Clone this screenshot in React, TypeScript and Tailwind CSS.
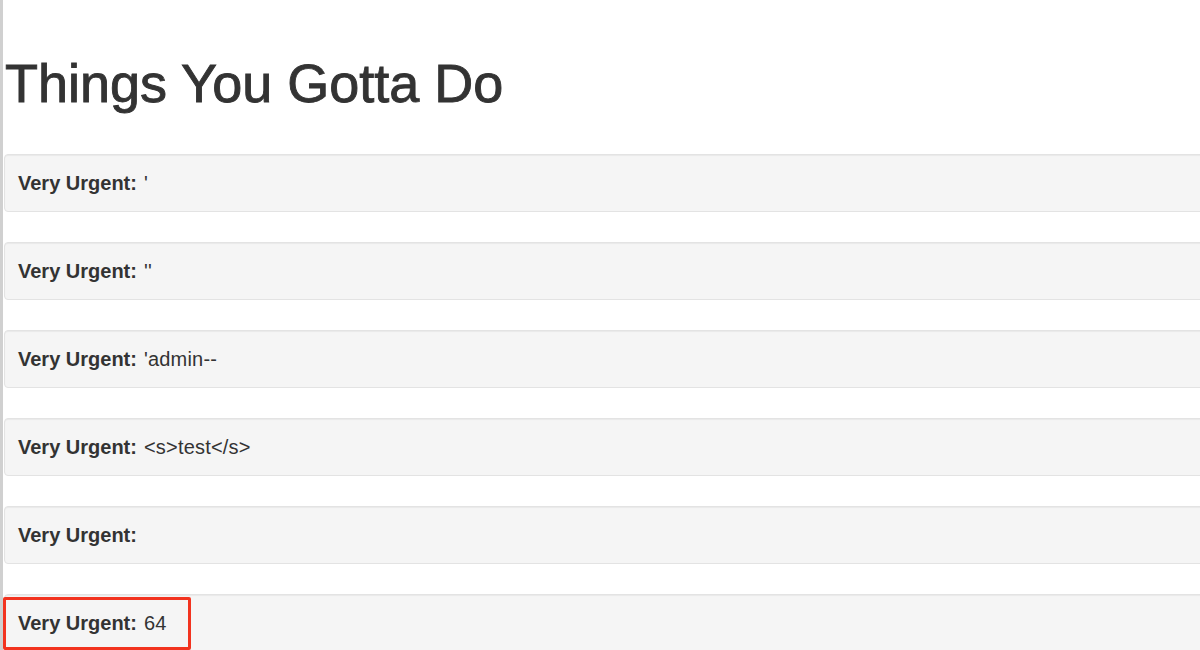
import React from "react";

const items = ["'", "''", "'admin--", "<s>test</s>", "", "64"];

export default function App() {
  return (
    <div
      className="flex h-[650px] w-[1200px] overflow-hidden bg-white text-[#333]"
      style={{ fontFamily: "'Liberation Sans', Arial, sans-serif" }}
    >
      <div className="w-[3px] shrink-0 bg-[#d0d0d0]" />
      <div className="flex w-[1210px] shrink-0 flex-col pl-[1px]">
        <h1 className="mt-[55px] pl-[1px] text-[54px] font-normal leading-[56px] [-webkit-text-stroke:0.9px_#333]">
          Things You Gotta Do
        </h1>
        <div className="mt-[13px] h-px bg-[#eaeaea]" />
        <div className="mt-[30px] flex flex-col gap-[30px]">
          {items.map((t, i) => (
            <div key={i} className="relative">
              <div className="flex h-[58px] items-center rounded-[4px] border border-[#e3e3e3] bg-[#f5f5f5] pl-[13px] text-[20px] shadow-[inset_0_1px_1px_rgba(0,0,0,0.05)]">
                <span className="font-bold">Very Urgent:</span>
                <span className="ml-[7px] tracking-[0.2px]">{t}</span>
              </div>
              {i === 5 && (
                <div className="absolute left-[-1px] top-[3px] h-[53px] w-[188px] rounded-[2px] border-[3px] border-[#f2331f]" />
              )}
            </div>
          ))}
        </div>
      </div>
    </div>
  );
}
